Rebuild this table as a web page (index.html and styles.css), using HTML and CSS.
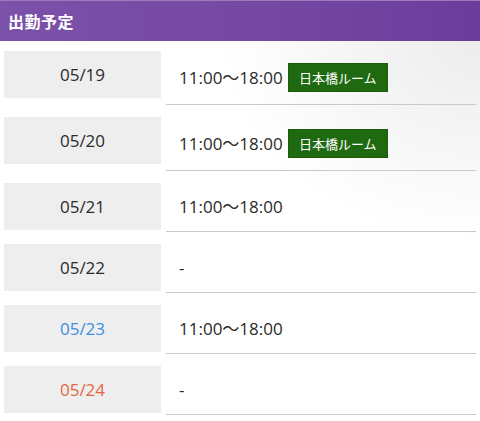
FILE: index.html
```html
<!DOCTYPE html>
<html lang="ja">
<head>
<meta charset="utf-8">
<link rel="stylesheet" href="styles.css">
</head>
<body>
<section class="schedule">
  <h2 class="schedule-title">出勤予定</h2>
  <div class="schedule-list">
    <div class="row">
      <div class="date">05/19</div>
      <div class="time">11:00〜18:00<span class="room">日本橋ルーム</span></div>
    </div>
    <div class="row">
      <div class="date">05/20</div>
      <div class="time">11:00〜18:00<span class="room">日本橋ルーム</span></div>
    </div>
    <div class="row">
      <div class="date">05/21</div>
      <div class="time">11:00〜18:00</div>
    </div>
    <div class="row">
      <div class="date">05/22</div>
      <div class="time">-</div>
    </div>
    <div class="row">
      <div class="date sat">05/23</div>
      <div class="time">11:00〜18:00</div>
    </div>
    <div class="row">
      <div class="date sun">05/24</div>
      <div class="time">-</div>
    </div>
  </div>
</section>
</body>
</html>
```

FILE: styles.css
```css
* { box-sizing: border-box; }
html, body { margin: 0; padding: 0; }
body {
  width: 480px;
  height: 421px;
  overflow: hidden;
  background: #fff;
  font-family: "Open Sans", "Noto Sans CJK JP", sans-serif;
  color: #2a2a2a;
}
.schedule-title {
  margin: 0;
  height: 41px;
  padding: 0 8px;
  display: flex;
  align-items: center;
  font-family: "Noto Sans CJK JP", sans-serif;
  font-size: 16px;
  font-weight: bold;
  color: #fff;
  background: linear-gradient(to right, #7c51a9, #7447a3 60%, #6c3c9a);
  border-top: 1px solid #9a7bc0;
  letter-spacing: 0.5px;
}
.schedule-list {
  padding: 10px 4px 0 4px;
  background:
    radial-gradient(ellipse 260px 200px at 100% 0%, #ececec 0%, rgba(255,255,255,0) 100%),
    #fff;
  height: 380px;
}
.row {
  display: flex;
  align-items: flex-start;
  margin-bottom: 12px;
}
.date {
  width: 157px;
  height: 47px;
  background: #eeeeee;
  display: flex;
  align-items: center;
  justify-content: center;
  font-size: 17px;
  color: #2a2a2a;
}
.date.sat { color: #3d8fe4; }
.date.sun { color: #e2663f; }
.time {
  flex: 1;
  margin-left: 5px;
  padding: 12px 0 12px 13px;
  border-bottom: 1px solid #c9c9c9;
  display: flex;
  align-items: center;
  font-size: 17px;
  line-height: 24px;
  color: #2a2a2a;
}
.room {
  display: inline-flex;
  align-items: center;
  justify-content: center;
  margin-left: 5px;
  width: 100px;
  height: 29px;
  background: #1f6a10;
  border: 1px solid #195a0b;
  color: #fff;
  font-family: "Noto Sans CJK JP", sans-serif;
  font-size: 13px;
}
```
